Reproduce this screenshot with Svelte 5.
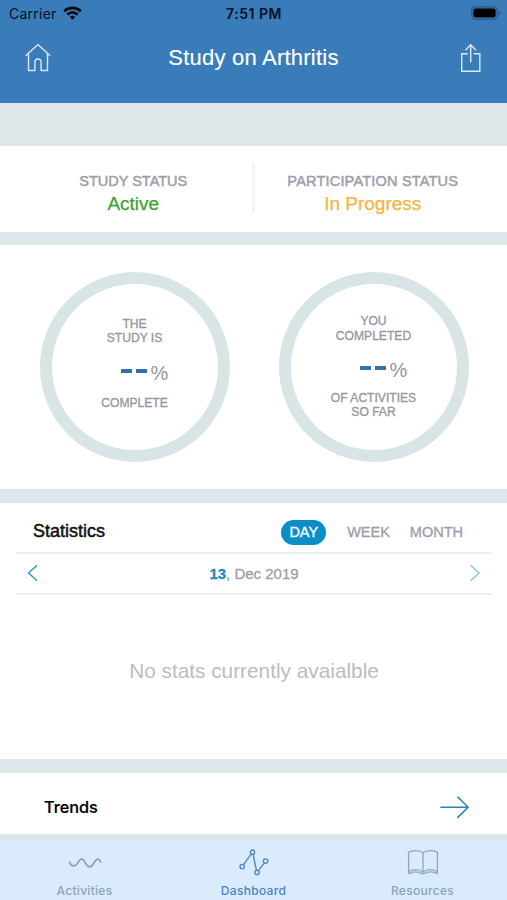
<script>
  const ranges = ['DAY', 'WEEK', 'MONTH'];
  let selected = $state('DAY');
</script>

<div class="screen">
  <header>
    <div class="statusbar">
      <div class="carrier">
        <span>Carrier</span>
        <svg width="19" height="14" viewBox="0 0 19 14" fill="none" stroke="#060c14" stroke-width="2.7">
          <path d="M1.2 5.3C5.7.8 13.3.8 17.8 5.3" />
          <path d="M4.3 8.6c2.9-2.9 7.5-2.9 10.4 0" />
          <path d="M6.8 10.9c1.5-1.4 3.9-1.4 5.4 0L9.5 13.7z" fill="#060c14" stroke="none" />
        </svg>
      </div>
      <div class="clock">7:51 PM</div>
      <div class="battery">
        <svg width="30" height="15" viewBox="0 0 30 15">
          <rect x=".8" y=".8" width="25.4" height="12.6" rx="3.6" fill="none" stroke="#285a88" stroke-width="1.3" />
          <rect x="2.4" y="2.6" width="22.2" height="9" rx="2" fill="#000" />
          <path d="M27.6 5v4.4c2.2-.7 2.2-3.7 0-4.4z" fill="#285a88" />
        </svg>
      </div>
    </div>
    <nav class="navbar">
      <svg class="home" width="26" height="30" viewBox="0 0 26 30" fill="none" stroke="#d7e9fa" stroke-width="1.4" stroke-linejoin="round" stroke-linecap="round">
        <path d="M1 12.4 12.9 1.5 24.9 12.4" />
        <path d="M3.5 11v16.5h6.4v-8.2c0-4.4 6.2-4.4 6.2 0v8.2h6.4V11" />
      </svg>
      <h1>Study on Arthritis</h1>
      <svg class="share" width="22" height="30" viewBox="0 0 22 30" fill="none" stroke="#d7e9fa" stroke-width="1.4">
        <path d="M7.8 10.8H1.7v17.4h18.1V10.8h-6.1M10.7 19.4V1.8M5.4 7.3l5.3-5.6L16 7.3" />
      </svg>
    </nav>
  </header>

  <section class="card status">
    <div class="cell">
      <div class="label study">STUDY STATUS</div>
      <div class="value active">Active</div>
    </div>
    <div class="divider"></div>
    <div class="cell">
      <div class="label participation">PARTICIPATION STATUS</div>
      <div class="value progress">In Progress</div>
    </div>
  </section>

  <section class="card rings">
    <div class="ring overall">
      <div class="caption">THE<br />STUDY IS</div>
      <div class="percent"><i></i><i></i><span>%</span></div>
      <div class="caption">COMPLETE</div>
    </div>
    <div class="ring">
      <div class="caption">YOU<br />COMPLETED</div>
      <div class="percent"><i></i><i></i><span>%</span></div>
      <div class="caption">OF ACTIVITIES<br />SO FAR</div>
    </div>
  </section>

  <section class="card stats">
    <div class="stats-head">
      <h2>Statistics</h2>
      <div class="ranges">
        {#each ranges as range}
          <button class:on={selected === range} class={range.toLowerCase()} onclick={() => (selected = range)}>{range}</button>
        {/each}
      </div>
    </div>
    <div class="date-row">
      <svg width="12" height="18" viewBox="0 0 12 18" fill="none" stroke="#2f94c8" stroke-width="1.4"><path d="M10 1.3 1.6 9 10 16.7" /></svg>
      <div class="date"><b>13</b>, Dec 2019</div>
      <svg width="12" height="18" viewBox="0 0 12 18" fill="none" stroke="#8ac3e0" stroke-width="1.4"><path d="M1.6 1.3 10 9l-8.4 7.7" /></svg>
    </div>
    <div class="empty"><span>No stats currently avaialble</span></div>
  </section>

  <section class="card trends">
    <h2>Trends</h2>
    <svg width="30" height="24" viewBox="0 0 30 24" fill="none" stroke="#2584bd" stroke-width="1.6" stroke-linecap="round" stroke-linejoin="round">
      <path d="M1 12.2h27M17.8 2 28.2 12.2 17.8 22.4" />
    </svg>
  </section>

  <footer>
    <div class="tab">
      <svg width="34" height="28" viewBox="0 0 34 28" fill="none" stroke="#8ba3bb" stroke-width="1.7" stroke-linecap="round">
        <path d="M1.500 13c1.500 4.500 5.700 5.400 8 1.400C12.500 8.800 14.800 8.600 17.500 14c2.500 5.500 5.800 5 8.300.2 2.600-5 5.700-5.400 6.700-1.200" />
      </svg>
      <span>Activities</span>
    </div>
    <div class="tab current">
      <svg width="34" height="28" viewBox="0 0 34 28" fill="none" stroke="#4685c6" stroke-width="1.3">
        <path d="M6.500 15.700 14.500 4.600M16 5l3.500 16.500M21.300 21.700l6.400-8" />
        <circle cx="5.200" cy="17.500" r="2.200" /><circle cx="15.500" cy="3.200" r="2.200" />
        <circle cx="20" cy="23.500" r="2.200" /><circle cx="28.600" cy="12.100" r="2.200" />
      </svg>
      <span>Dashboard</span>
    </div>
    <div class="tab">
      <svg width="34" height="28" viewBox="0 0 34 28" fill="none" stroke="#8fa6bd" stroke-width="1.3" stroke-linejoin="round">
        <path d="M17 3.800C13.500.8 6.500 1 2.600 3.300v21.400c4.500-2.300 9.500-2.300 13.200-.2h2.400c3.700-2.100 8.700-2.100 13.200.2V3.300C27.500 1 20.500.8 17 3.800zM17 3.800v19" />
        <path d="M3 22.400c4.500-2.300 10-2.300 14 .6 4-2.900 9.500-2.900 14-.6" />
      </svg>
      <span>Resources</span>
    </div>
  </footer>
</div>

<style>
  :global(body) { background: #dde6e8; }
  .screen {
    width: 507px;
    height: 900px;
    overflow: hidden;
    display: flex;
    flex-direction: column;
    background: #dde6e8;
    font-family: "Liberation Sans", Arial, sans-serif;
    white-space: nowrap;
  }
  h1, h2 { margin: 0; font-weight: 400; }
  svg { display: block; flex: none; }
  header { height: 103.400px; background: #397cb9; margin-bottom: 42.600px; }
  .statusbar {
    display: grid;
    grid-template-columns: 1fr auto 1fr;
    height: 27px;
    align-items: center;
    padding: 0 6px 0 9px;
    font: 500 14px/27px Inter, sans-serif;
    color: #06121f;
  }
  .carrier { display: flex; align-items: center; gap: 6px; font-weight: 400; letter-spacing: .25px; }
  .carrier svg { margin-top: -2px; }
  .clock { font-weight: 600; letter-spacing: .5px; margin-left: -2px; }
  .battery { display: flex; justify-content: flex-end; }
  .navbar { display: flex; justify-content: space-between; align-items: center; height: 61px; padding: 0 25px; }
  h1 { color: #fff; font-size: 22px; letter-spacing: .22px; margin-left: -4px; -webkit-text-stroke: .15px; }
  .card { background: #fff; box-sizing: border-box; flex: none; }
  .status { height: 86px; display: flex; align-items: center; margin-bottom: 13px; }
  .cell { flex: 1; text-align: center; padding-top: 9px; }
  .cell:first-child { padding-left: 15px; }
  .cell:last-child { padding-right: 16px; }
  .divider { width: 3px; height: 49px; background: #f1f3f5; }
  .label { font-size: 14.500px; line-height: 20px; color: #9c9faa; -webkit-text-stroke: .5px; }
  .participation { letter-spacing: .2px; }
  .value { font-size: 19px; line-height: 25px; -webkit-text-stroke: .25px; }
  .active { color: #3ba22f; }
  .progress { color: #f5b43c; }
  .rings { height: 244.500px; margin-bottom: 13.500px; padding: 27px 38.500px 0 39.500px; display: flex; justify-content: space-between; }
  .ring {
    width: 190px;
    height: 190px;
    box-sizing: border-box;
    border: 12px solid #d9e4e6;
    border-radius: 50%;
    display: flex;
    flex-direction: column;
    align-items: center;
    justify-content: center;
    text-align: center;
  }
  .overall { padding-bottom: 7px; }
  .overall .percent { margin-bottom: 7px; }
  .caption { font-size: 12.100px; line-height: 14.300px; color: #9297a0; -webkit-text-stroke: .3px; }
  .percent { display: flex; align-items: center; height: 35px; margin: 8px 0 5px 20px; color: #9297a0; }
  .percent i { width: 11px; height: 4px; background: #2e72b5; margin-right: 4px; }
  .percent span { font-size: 20px; margin: 5px 0 0; }
  .stats { height: 256.500px; margin-bottom: 13.500px; padding: 0 15px 0 16px; }
  .stats-head { height: 49px; border-bottom: 2px solid #edf0f1; display: flex; justify-content: space-between; padding: 0 21px 0 17px; }
  h2 { font-size: 18px; color: #111; -webkit-text-stroke: .5px; line-height: 57px; }
  .ranges { display: flex; padding-top: 17px; }
  button {
    border: 0;
    background: none;
    padding: 0 8px;
    height: 25px;
    font: 14.500px/25px "Liberation Sans", Arial, sans-serif;
    color: #9c9faa;
    -webkit-text-stroke: .35px;
    border-radius: 13px;
  }
  .on { background: #0a8ec8; color: #fff; }
  .week { margin: 0 4px 0 13px; }
  .date-row { height: 39px; border-bottom: 2px solid #edf0f1; display: flex; align-items: center; justify-content: space-between; padding: 0 11px 0 11px; }
  .date { font-size: 15px; color: #9c9faa; -webkit-text-stroke: .3px; padding-top: 1px; }
  .date b { color: #2389bf; }
  .empty { height: 153px; display: flex; justify-content: center; align-items: center; color: #bcbcbc; font-size: 20.800px; }
  .trends { height: 61px; display: flex; justify-content: space-between; align-items: center; padding: 7px 37px 0 44px; }
  .trends h2 { font: 500 16.300px/24px Inter, sans-serif; -webkit-text-stroke: .2px; color: #000; }
  footer { height: 60px; margin-top: 6px; flex: none; background: #d9ebfc; display: flex; justify-content: space-around; }
  .tab { flex: 1; display: flex; flex-direction: column; align-items: center; padding-top: 9px; font: 500 12px/16px Inter, sans-serif; color: #8ba3bb; letter-spacing: .3px; }
  .tab span { margin-top: 6.500px; }
  .current { color: #4685c6; }
</style>
